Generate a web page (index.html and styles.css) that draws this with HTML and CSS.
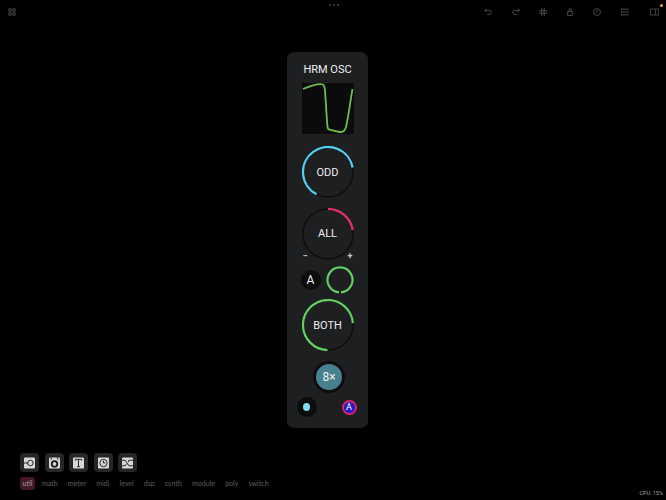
FILE: index.html
```html
<!DOCTYPE html>
<html lang="en">
<head>
  <meta charset="UTF-8">
  <title>HRM OSC</title>
  <link rel="stylesheet" href="styles.css">
</head>
<body>
  <div class="app">
    <div class="topbar">
      <svg class="tb-icon" viewBox="0 0 10 10"><path d="M1 1h3v3H1zM6 1h3v3H6zM1 6h3v3H1zM6 6h3v3H6z"/></svg>
      <div class="grip"><i></i><i></i><i></i></div>
      <div class="tools">
        <svg class="tb-icon" viewBox="0 0 10 10"><path d="M3 1 1 3l2 2M1 3h5a2.500 2.500 0 0 1 1 5H4"/></svg>
        <svg class="tb-icon" viewBox="0 0 10 10"><path d="M7 1l2 2-2 2M9 3H4a2.500 2.500 0 0 0-1 5h3"/></svg>
        <svg class="tb-icon" viewBox="0 0 10 10"><path d="M3.500 0v10M6.500 0v10M0 3.500h10M0 6.500h10"/></svg>
        <svg class="tb-icon" viewBox="0 0 10 10"><path d="M2 4.500h6v5H2zM3.500 4.500V2.500a1.500 1.500 0 0 1 3 0v2"/></svg>
        <svg class="tb-icon" viewBox="0 0 10 10"><circle cx="5" cy="5" r="4.300"/><path d="M5.500 2.500 5 5l-1.500 1.500"/></svg>
        <svg class="tb-icon" viewBox="0 0 10 10"><path d="M0 1.500h10M0 5h10M0 8.500h10M1 .5v2M1 4v2M1 7.500v2"/></svg>
        <div class="sidebar-btn">
          <svg class="tb-icon wide" viewBox="0 0 12 10"><path d="M.5 1h11v8H.5zM7.500 1v8"/></svg>
          <span class="notify"></span>
        </div>
      </div>
    </div>

    <div class="canvas">
      <div class="module">
        <div class="title">HRM OSC</div>
        <svg class="scope" viewBox="0 0 52 51">
          <path d="M1 6C7 3.500 13 1 19 1.200c2.500 0 3.200 1 3.800 4.500C24 20 24.500 33 25.500 44c.3 1.800.8 2.500 2 2.700 4 .6 8 2.200 11.500 2.300 2.500 0 4-1.500 5-5C46 36 48 20 50.500 6"/>
        </svg>

        <div class="knob knob-odd">
          <svg viewBox="0 0 52 52">
            <circle class="track" cx="26" cy="26" r="25"/>
            <path class="arc cyan" d="M14.500 48.200A25 25 0 1 1 50.600 21.500"/>
          </svg>
          <span>ODD</span>
        </div>

        <div class="knob knob-all">
          <svg viewBox="0 0 52 52">
            <circle class="track" cx="26" cy="26" r="25"/>
            <path class="arc pink" d="M26 1A25 25 0 0 1 50.700 22"/>
          </svg>
          <span>ALL</span>
        </div>
        <div class="range"><span>−</span><span>+</span></div>

        <div class="row-mod">
          <div class="btn-a">A</div>
          <svg class="ring" viewBox="0 0 28 28">
            <path class="arc green" d="M15 26.400A12.500 12.500 0 1 0 13 26.400"/>
          </svg>
        </div>

        <div class="knob knob-both">
          <svg viewBox="0 0 52 52">
            <circle class="track" cx="26" cy="26" r="25"/>
            <path class="arc green" d="M25.500 51A25 25 0 1 1 50.900 24.200"/>
          </svg>
          <span>BOTH</span>
        </div>

        <div class="oversample"><div>8×</div></div>

        <div class="row-bottom">
          <div class="led"><i></i></div>
          <div class="auto">A</div>
        </div>
      </div>
    </div>

    <div class="bottom">
      <div class="dock">
        <div class="dock-item">
          <svg viewBox="0 0 12 12"><rect class="fill-light" width="12" height="12" rx="1"/><path class="ink" d="M0 6h4.500"/><circle class="ink" cx="7" cy="6" r="3"/></svg>
        </div>
        <div class="dock-item">
          <svg viewBox="0 0 12 12"><rect class="fill-light" width="12" height="12" rx="1"/><circle class="ink thick" cx="6" cy="7" r="3"/><path class="ink" d="M2.500 0v2.500M9.500 0v2.500"/></svg>
        </div>
        <div class="dock-item">
          <svg viewBox="0 0 12 12"><rect class="fill-light" width="12" height="12" rx="1"/><path class="ink" d="M2.500 3.500V2h7v1.500M6 2v8M4.500 10h3"/></svg>
        </div>
        <div class="dock-item">
          <svg viewBox="0 0 12 12"><rect class="fill-light" width="12" height="12" rx="1"/><circle class="ink" cx="6" cy="6" r="4"/><path class="ink" d="M6 3.500V6h2"/></svg>
        </div>
        <div class="dock-item">
          <svg viewBox="0 0 12 12"><rect class="fill-light" width="12" height="12" rx="1"/><path class="ink" d="M0 3h3.500l4 6H12M0 9h3.500l1.500-2.200M7 5l.5-2H12"/></svg>
        </div>
      </div>
      <div class="tabs">
        <span class="tab active">util</span>
        <span class="tab">math</span>
        <span class="tab">meter</span>
        <span class="tab">midi</span>
        <span class="tab">level</span>
        <span class="tab">dsp</span>
        <span class="tab">synth</span>
        <span class="tab">module</span>
        <span class="tab">poly</span>
        <span class="tab">switch</span>
      </div>
      <div class="cpu">CPU: 15%</div>
    </div>
  </div>
</body>
</html>
```

FILE: styles.css
```css
* {
  box-sizing: border-box;
}
body {
  margin: 0;
  background: #000;
  font-family: "Roboto", "Liberation Sans", sans-serif;
  color: #eee;
}
svg {
  display: block;
}
.app {
  width: 666px;
  height: 500px;
  display: flex;
  flex-direction: column;
  overflow: hidden;
}

/* top bar */
.topbar {
  height: 24px;
  display: flex;
  justify-content: space-between;
  padding: 8px 7px 0 8px;
  position: relative;
}
.tb-icon {
  width: 8px;
  height: 8px;
  fill: none;
  stroke: #585858;
  stroke-width: 1;
}
.tb-icon.wide {
  width: 9px;
  height: 8px;
}
.grip {
  position: absolute;
  top: 4px;
  left: 329px;
  display: flex;
  gap: 2px;
}
.grip i {
  width: 2px;
  height: 2px;
  background: #333;
}
.tools {
  display: flex;
  gap: 19.3px;
  align-items: flex-start;
}
.sidebar-btn {
  position: relative;
  margin-left: 2px;
}
.notify {
  position: absolute;
  top: -4px;
  right: -4px;
  width: 3px;
  height: 3px;
  border-radius: 50%;
  background: #f5a623;
}

/* module */
.canvas {
  height: 404px;
  padding: 28px 0 0 287px;
}
.module {
  width: 81px;
  height: 376px;
  background: #1e1f21;
  border-radius: 7px;
  display: flex;
  flex-direction: column;
  align-items: center;
  padding-top: 11px;
}
.title {
  font-size: 11px;
  line-height: 13px;
}
.scope {
  width: 52px;
  height: 51px;
  margin-top: 7px;
  background: #0b0b0c;
  fill: none;
  stroke: #6abf4b;
  stroke-width: 1.8;
}
.knob {
  width: 52px;
  height: 52px;
  display: grid;
  place-items: center;
  font-size: 11px;
}
.knob svg,
.knob span {
  grid-area: 1 / 1;
}
.knob svg {
  width: 52px;
  height: 52px;
  fill: none;
}
.knob-odd {
  margin-top: 12px;
}
.knob-all {
  margin-top: 9.5px;
}
.knob-both {
  margin-top: 5px;
}
.track {
  stroke: #0e0e0f;
  stroke-width: 1.5;
}
.arc {
  fill: none;
  stroke-width: 2.2;
}
.cyan {
  stroke: #55d2f2;
}
.pink {
  stroke: #ea2f6a;
}
.green {
  stroke: #63cf63;
}
.range {
  width: 52px;
  height: 8px;
  margin-top: -8px;
  display: flex;
  justify-content: space-between;
  padding: 0 1px;
  font-size: 9px;
  line-height: 8px;
  font-weight: 700;
  color: #c8c8c8;
}
.row-mod {
  width: 52px;
  margin-top: 6.5px;
  display: flex;
  align-items: center;
  justify-content: space-between;
}
.btn-a {
  width: 20px;
  height: 20px;
  margin-left: -1px;
  border-radius: 50%;
  background: #0c0c0d;
  text-align: center;
  font-size: 12px;
  line-height: 20px;
}
.ring {
  width: 28px;
  height: 28px;
}
.oversample {
  width: 32px;
  height: 32px;
  margin: 10px 0 0 3px;
  padding: 3px;
  border-radius: 50%;
  background: #0e0e0f;
}
.oversample div {
  width: 26px;
  height: 26px;
  border-radius: 50%;
  background: #47808f;
  text-align: center;
  font-size: 12px;
  line-height: 26px;
}
.row-bottom {
  width: 62px;
  margin-top: 4px;
  display: flex;
  align-items: center;
  justify-content: space-between;
}
.led {
  width: 20px;
  height: 20px;
  border-radius: 50%;
  background: #0c0c0d;
  display: grid;
  place-items: center;
}
.led i {
  width: 7px;
  height: 8px;
  border-radius: 50%;
  background: #7fdcfb;
}
.auto {
  width: 15px;
  height: 15px;
  margin-right: 2px;
  border-radius: 50%;
  border: 2px solid #e01f6e;
  background: #1d1fc8;
  text-align: center;
  font-size: 9px;
  line-height: 11px;
  color: #fff;
}

/* dock */
.bottom {
  flex: 1;
  padding: 25px 0 0 20px;
  position: relative;
}
.dock {
  display: flex;
  gap: 5.5px;
}
.dock-item {
  width: 19px;
  height: 19px;
  background: #262628;
  border-radius: 4px;
  padding: 3px 4px;
  display: grid;
  place-items: center;
}
.dock-item svg {
  width: 11px;
  height: 12px;
}
.fill-light {
  fill: #d6d6d6;
}
.ink {
  fill: none;
  stroke: #1a1a1a;
  stroke-width: 1;
}
.ink.thick {
  stroke-width: 2;
}
.tabs {
  display: flex;
  gap: 10px;
  margin-top: 5px;
  font-family: "Lato", "Liberation Sans", sans-serif;
  font-size: 7.1px;
  line-height: 13px;
  color: #5c5c5c;
}
.tab.active {
  color: #a8979c;
  background: #451828;
  border-radius: 3px;
  padding: 0 2.5px;
  margin-right: -3px;
}
.cpu {
  position: absolute;
  right: 3px;
  bottom: 4px;
  font-size: 5.5px;
  color: #a0a0a0;
}
```
